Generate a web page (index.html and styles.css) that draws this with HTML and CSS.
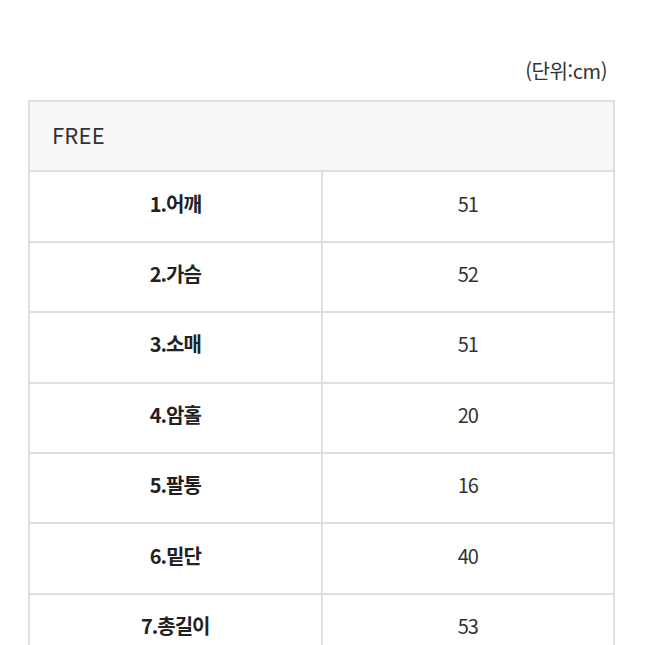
FILE: index.html
```html
<!DOCTYPE html>
<html lang="ko">
<head>
<meta charset="utf-8">
<link rel="stylesheet" href="styles.css">
</head>
<body>
<div class="page">
  <div class="unit">(단위:cm)</div>
  <table class="size-table">
    <thead>
      <tr><th colspan="2" class="head">FREE</th></tr>
    </thead>
    <tbody>
      <tr><td class="label">1.어깨</td><td class="value">51</td></tr>
      <tr><td class="label">2.가슴</td><td class="value">52</td></tr>
      <tr><td class="label">3.소매</td><td class="value">51</td></tr>
      <tr><td class="label">4.암홀</td><td class="value">20</td></tr>
      <tr><td class="label">5.팔통</td><td class="value">16</td></tr>
      <tr><td class="label">6.밑단</td><td class="value">40</td></tr>
      <tr><td class="label">7.총길이</td><td class="value">53</td></tr>
    </tbody>
  </table>
</div>
</body>
</html>
```
FILE: styles.css
```css
html, body {
  margin: 0;
  padding: 0;
  background: #ffffff;
}
body {
  font-family: "Noto Sans CJK KR", "Noto Sans", sans-serif;
  color: #333;
}
.page {
  padding: 56px 30px 0 28px;
}
.unit {
  text-align: right;
  font-size: 20px;
  line-height: 30px;
  padding-right: 8px;
  color: #333;
  letter-spacing: -0.4px;
  margin-bottom: 14px;
}
.size-table {
  width: 100%;
  border-collapse: collapse;
  table-layout: fixed;
}
.size-table th,
.size-table td {
  box-sizing: border-box;
  border: 2px solid #dfdfdf;
  padding: 0 0 7px 0;
  height: 70.4px;
  font-size: 20px;
  letter-spacing: -1px;
}
.size-table th.head {
  background: #f8f8fa;
  text-align: left;
  padding: 0 0 4px 22px;
  font-size: 22px;
  font-weight: 400;
  color: #333;
  letter-spacing: 0.2px;
}
.label {
  width: 50%;
  text-align: center;
  font-weight: 700;
  color: #222;
}
.value {
  text-align: center;
  font-weight: 400;
  color: #333;
}
```
